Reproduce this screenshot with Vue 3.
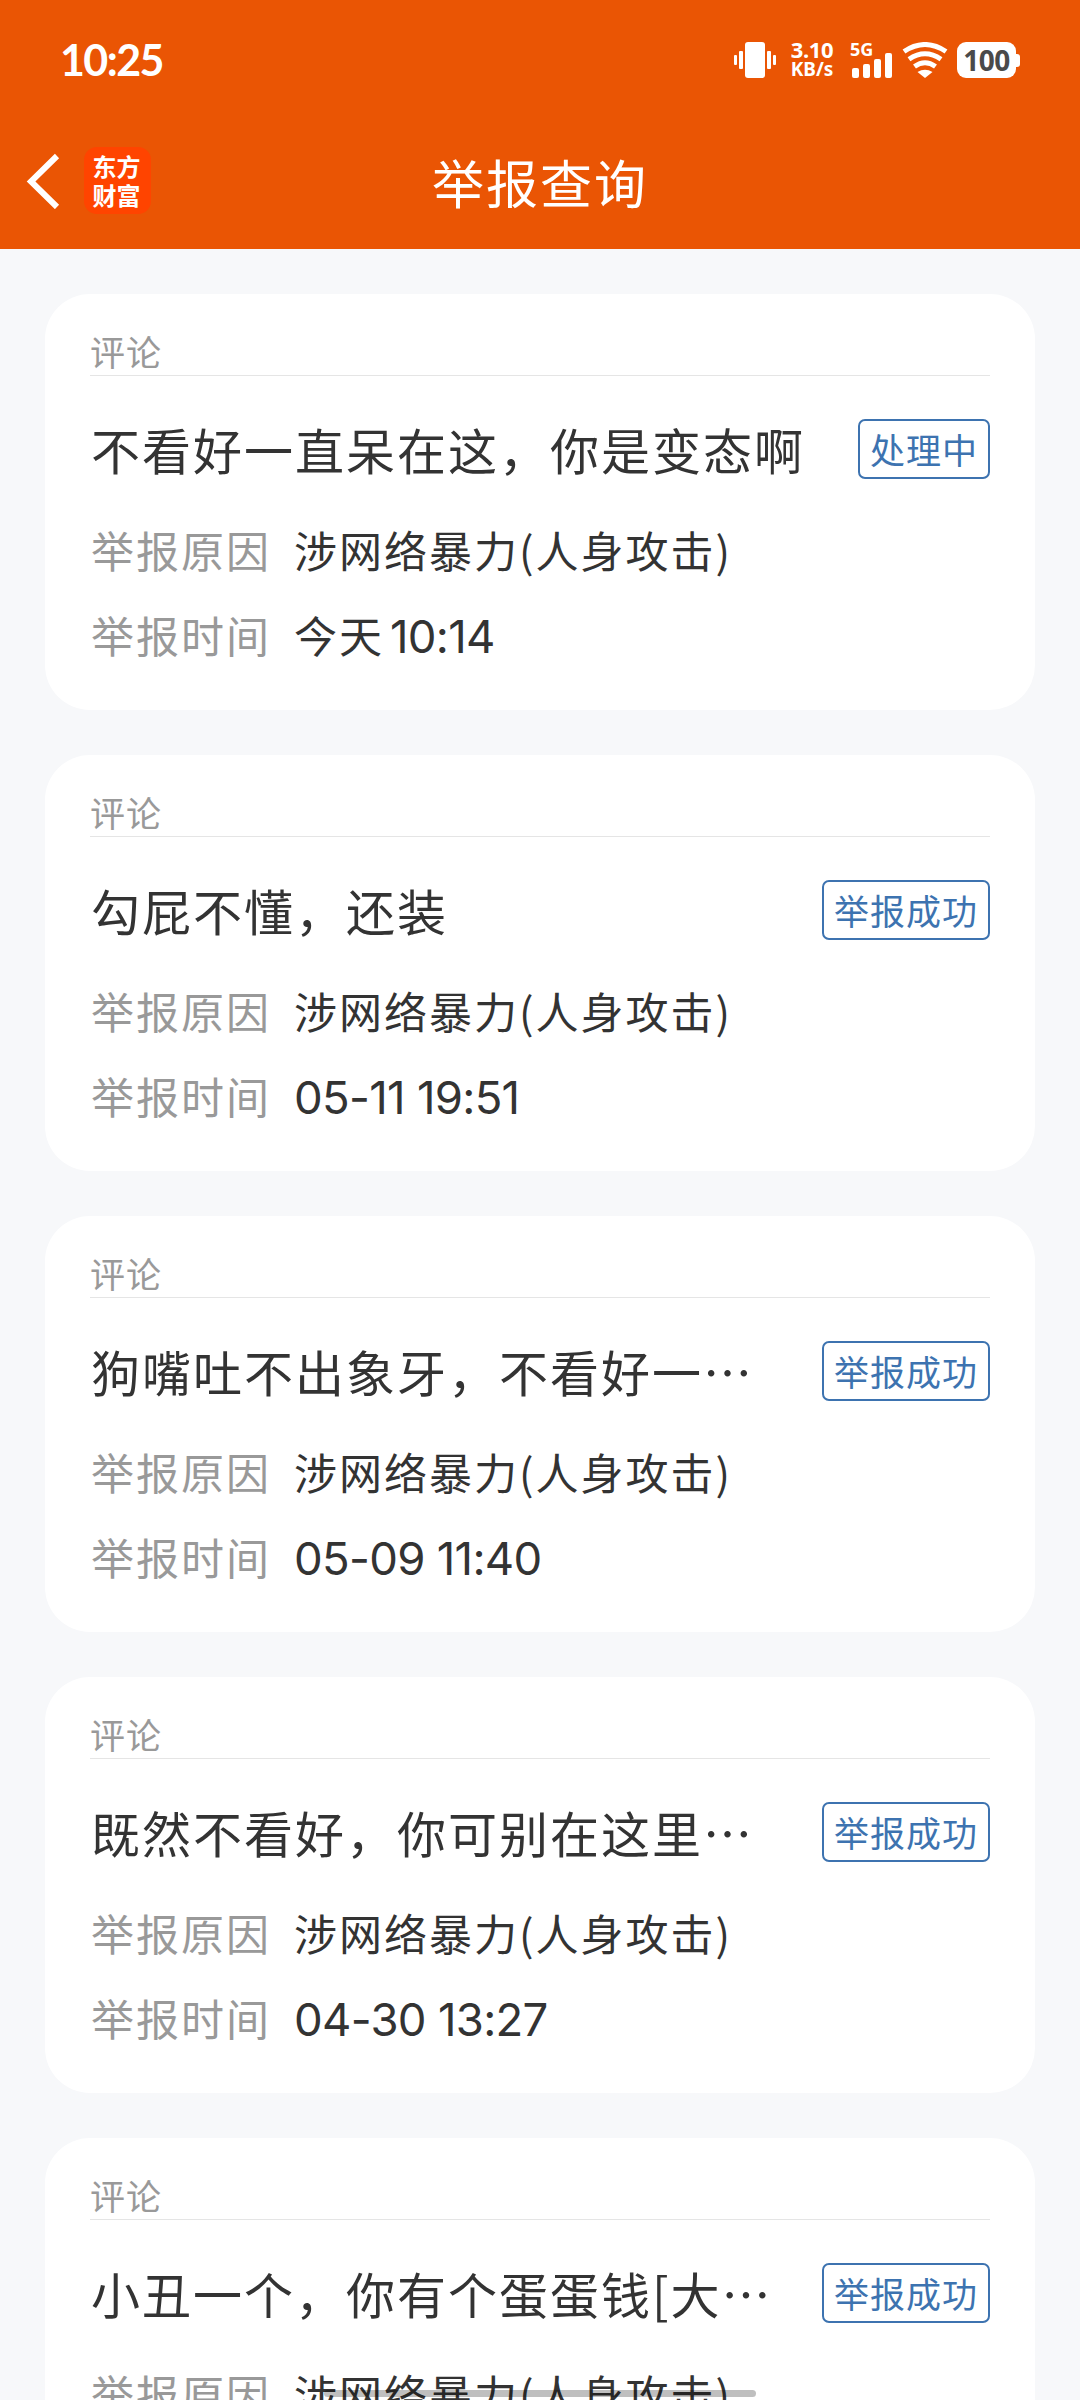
<script setup>
import { ref } from 'vue'

const reports = ref([
  { id: 1, type: '评论', title: '不看好一直呆在这，你是变态啊', status: '处理中', reason: '涉网络暴力(人身攻击)', day: '今天', time: '10:14' },
  { id: 2, type: '评论', title: '勾屁不懂，还装', status: '举报成功', reason: '涉网络暴力(人身攻击)', time: '05-11 19:51' },
  { id: 3, type: '评论', title: '狗嘴吐不出象牙，不看好一…', status: '举报成功', reason: '涉网络暴力(人身攻击)', time: '05-09 11:40' },
  { id: 4, type: '评论', title: '既然不看好，你可别在这里…', status: '举报成功', reason: '涉网络暴力(人身攻击)', time: '04-30 13:27' },
  { id: 5, type: '评论', title: '小丑一个，你有个蛋蛋钱[大…', status: '举报成功', reason: '涉网络暴力(人身攻击)' }
])
</script>

<template>
  <div class="page">
    <header class="header">
      <div class="status-bar">
        <span class="clock">10:25</span>
        <div class="status-icons">
          <svg class="vibrate" width="42" height="36" viewBox="0 0 42 36" fill="#fff">
            <rect x="0" y="13" width="3" height="10" rx="1" />
            <rect x="5" y="9" width="4" height="18" rx="1" />
            <rect x="11" y="0" width="20" height="36" rx="3" />
            <rect x="33" y="9" width="4" height="18" rx="1" />
            <rect x="39" y="13" width="3" height="10" rx="1" />
          </svg>
          <div class="speed">
            <span class="speed-num">3.10</span>
            <span class="speed-unit">KB/s</span>
          </div>
          <div class="signal">
            <span class="net">5G</span>
            <svg width="40" height="25" viewBox="0 0 40 25" fill="#fff">
              <rect x="0" y="15" width="7" height="10" rx="2" />
              <rect x="11" y="11" width="7" height="14" rx="2" />
              <rect x="22" y="6" width="7" height="19" rx="2" />
              <rect x="33" y="0" width="7" height="25" rx="2" />
            </svg>
          </div>
          <svg class="wifi" width="46" height="36" viewBox="0 0 46 36" fill="none" stroke="#fff" stroke-width="5">
            <path d="M2 9.5 Q23 -4.5 44 9.5" />
            <path d="M7 17.2 Q23 6.2 39 17.2" />
            <path d="M12.5 24.5 Q23 17 33.5 24.5" />
            <path d="M15.5 30 Q23 25.6 30.5 30 L23 36 Z" fill="#fff" stroke="none" />
          </svg>
          <div class="battery">
            <span class="battery-body">100</span>
            <span class="battery-cap"></span>
          </div>
        </div>
      </div>
      <nav class="nav-bar">
        <div class="nav-left">
          <svg width="34" height="56" viewBox="0 0 34 56" fill="none" stroke="#fff" stroke-width="6">
            <path d="M31 3 L5 28.5 L31 54" />
          </svg>
          <div class="logo">
            <span>东方</span>
            <span>财富</span>
          </div>
        </div>
        <h1 class="nav-title">举报查询</h1>
        <div class="nav-right"></div>
      </nav>
    </header>

    <main class="list">
      <section v-for="item in reports" :key="item.id" class="card">
        <div class="card-type">{{ item.type }}</div>
        <div class="card-head">
          <div class="card-title">{{ item.title }}</div>
          <div class="tag">{{ item.status }}</div>
        </div>
        <div class="row">
          <span class="label">举报原因</span>
          <span class="value">{{ item.reason }}</span>
        </div>
        <div v-if="item.time" class="row">
          <span class="label">举报时间</span>
          <span v-if="item.day" class="value day">{{ item.day }}</span>
          <span class="value time">{{ item.time }}</span>
        </div>
      </section>
    </main>

    <div class="home-indicator"></div>
  </div>
</template>

<style>
body { margin: 0; background: #f7f8fa; }
</style>

<style scoped>
.page {
  position: relative;
  width: 1080px;
  height: 2400px;
  overflow: hidden;
  background: #f7f8fa;
  color: #333;
  font-family: "Noto Sans CJK SC", sans-serif;
}

/* 顶部 */
.header { height: 249px; background: #ea5504; color: #fff; }
.status-bar {
  display: flex;
  justify-content: space-between;
  height: 120px;
  padding: 0 60px;
  box-sizing: border-box;
  align-items: center;
}
.clock { font: 700 43px/50px Lato, sans-serif; letter-spacing: -1.6px; }
.status-icons { display: flex; align-items: center; height: 36px; }
.speed {
  display: flex;
  flex-direction: column;
  align-items: center;
  width: 46px;
  margin-left: 13px;
  font-family: "Noto Sans", sans-serif;
  font-weight: 700;
}
.speed-num { font-size: 22px; line-height: 18px; letter-spacing: -0.4px; }
.speed-unit { font-size: 19px; line-height: 22px; }
.signal {
  position: relative;
  display: flex;
  align-items: flex-end;
  width: 42px;
  height: 36px;
  margin-left: 15px;
  padding-left: 2px;
  box-sizing: border-box;
}
.net { position: absolute; left: 0; top: -1px; font: 700 18px/16px "Noto Sans", sans-serif; }
.wifi { margin-left: 10px; }
.battery { display: flex; align-items: center; margin-left: 9px; }
.battery-body {
  width: 59px;
  height: 36px;
  border-radius: 9px;
  background: #fff;
  color: #4a4a4a;
  font: 700 28px/37px "Noto Sans", sans-serif;
  letter-spacing: -0.5px;
  text-align: center;
}
.battery-cap { width: 4px; height: 13px; border-radius: 0 3px 3px 0; background: #fff; }

.nav-bar { display: flex; align-items: center; height: 121px; padding: 0 26px; }
.nav-left, .nav-right { display: flex; align-items: center; flex: 1; }
.logo {
  display: flex;
  flex-direction: column;
  align-items: center;
  justify-content: center;
  width: 67px;
  height: 67px;
  margin-left: 24px;
  border-radius: 13px;
  background: #ff4400;
  font-size: 24px;
  font-weight: 700;
  line-height: 30px;
}
.logo span { margin-top: -1px; margin-right: 2px; }
.nav-title { margin: 0; padding-top: 2px; font-size: 52px; font-weight: 400; line-height: 80px; letter-spacing: 2px; }

/* 举报列表 */
.list { display: flex; flex-direction: column; gap: 45px; padding: 45px; }
.card {
  flex: none;
  height: 416px;
  padding: 30px 45px 0;
  box-sizing: border-box;
  border-radius: 45px;
  background: #fff;
}
.card-type {
  height: 51px;
  border-bottom: 1px solid #e5e5e5;
  color: #999;
  font-size: 35px;
  line-height: 54px;
  letter-spacing: 1px;
}
.card-head { display: flex; align-items: center; justify-content: space-between; height: 60px; margin-top: 43px; }
.card-title { padding-left: 1px; font-size: 49px; line-height: 60px; letter-spacing: 2px; white-space: nowrap; }
.tag {
  height: 60px;
  padding: 0 10px;
  box-sizing: border-box;
  border: 2px solid #3d73b0;
  border-radius: 7px;
  color: #3d73b0;
  font-size: 35px;
  line-height: 55px;
  letter-spacing: 1px;
  white-space: nowrap;
}
.row { display: flex; align-items: center; height: 85px; font-size: 43px; letter-spacing: 2px; white-space: nowrap; }
.card-head + .row { margin-top: 27px; }
.label { width: 203px; padding-left: 1px; color: #999; }
.day { margin-right: 6px; }
.time { padding-top: 6px; font-family: Inter, "Noto Sans CJK SC", sans-serif; font-size: 45.5px; letter-spacing: -0.7px; }

.home-indicator {
  position: absolute;
  left: 324px;
  bottom: 3px;
  width: 432px;
  height: 7px;
  border-radius: 4px;
  background: rgba(0, 0, 0, 0.25);
}
</style>
